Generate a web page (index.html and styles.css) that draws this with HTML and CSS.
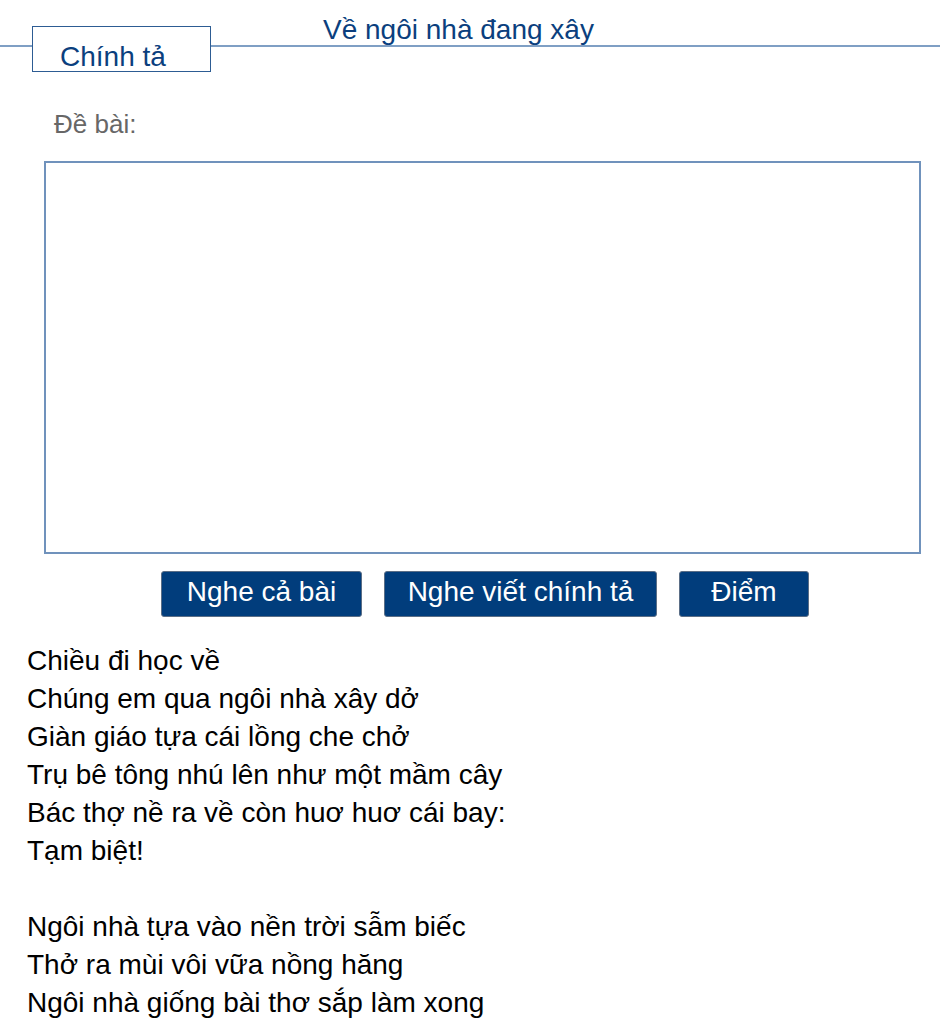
FILE: index.html
```html
<!DOCTYPE html>
<html lang="vi">
<head>
<meta charset="utf-8">
<title>Chính tả</title>
<link rel="stylesheet" href="styles.css">
</head>
<body>
<div class="header">
  <div class="tab">Chính tả</div>
  <div class="title">Về ngôi nhà đang xây</div>
</div>
<div class="label">Đề bài:</div>
<div class="answer"></div>
<div class="actions">
  <button class="btn btn-all">Nghe cả bài</button>
  <button class="btn btn-dictate">Nghe viết chính tả</button>
  <button class="btn btn-score">Điểm</button>
</div>
<div class="poem">
  <div>Chiều đi học về</div>
  <div>Chúng em qua ngôi nhà xây dở</div>
  <div>Giàn giáo tựa cái lồng che chở</div>
  <div>Trụ bê tông nhú lên như một mầm cây</div>
  <div>Bác thợ nề ra về còn huơ huơ cái bay:</div>
  <div>Tạm biệt!</div>
  <div class="blank">&nbsp;</div>
  <div>Ngôi nhà tựa vào nền trời sẫm biếc</div>
  <div>Thở ra mùi vôi vữa nồng hăng</div>
  <div>Ngôi nhà giống bài thơ sắp làm xong</div>
</div>
</body>
</html>
```
FILE: styles.css
```css
html, body {
  margin: 0;
  padding: 0;
  background: #ffffff;
}
body {
  font-family: "Liberation Sans", Arial, sans-serif;
  width: 940px;
  overflow: hidden;
}
.header {
  position: relative;
  height: 72px;
  display: flex;
  align-items: flex-start;
}
.header::before {
  content: "";
  position: absolute;
  left: 0;
  right: 0;
  top: 45px;
  height: 2px;
  background: #7f9fc4;
}
.tab {
  position: relative;
  z-index: 1;
  box-sizing: border-box;
  margin: 26px 0 0 32px;
  width: 179px;
  height: 46px;
  padding: 15px 0 0 27px;
  border: 1px solid #2d5c93;
  background: #ffffff;
  color: #0b3f7e;
  font-size: 28px;
  line-height: 29px;
  white-space: nowrap;
}
.title {
  position: relative;
  z-index: 1;
  margin: 14px 0 0 112px;
  color: #0b3f7e;
  font-size: 28px;
  line-height: 32px;
  white-space: nowrap;
}
.label {
  margin: 37px 0 0 54px;
  color: #676767;
  font-size: 26px;
  line-height: 30px;
}
.answer {
  box-sizing: border-box;
  margin: 22px 0 0 44px;
  width: 877px;
  height: 393px;
  border: 2px solid #7092bc;
  background: #ffffff;
}
.actions {
  display: flex;
  gap: 22px;
  margin: 17px 0 0 161px;
}
.btn {
  box-sizing: border-box;
  height: 46px;
  padding: 0 0 5px;
  border: 1px solid #5b6e86;
  border-radius: 3px;
  background: #013d7c;
  color: #ffffff;
  font-family: "Liberation Sans", Arial, sans-serif;
  font-size: 28px;
  line-height: 39px;
  text-align: center;
  white-space: nowrap;
}
.btn-all { width: 201px; }
.btn-dictate { width: 273px; }
.btn-score { width: 130px; }
.poem {
  margin: 25px 0 0 27px;
  color: #000000;
  font-size: 28px;
  line-height: 38px;
}
```
